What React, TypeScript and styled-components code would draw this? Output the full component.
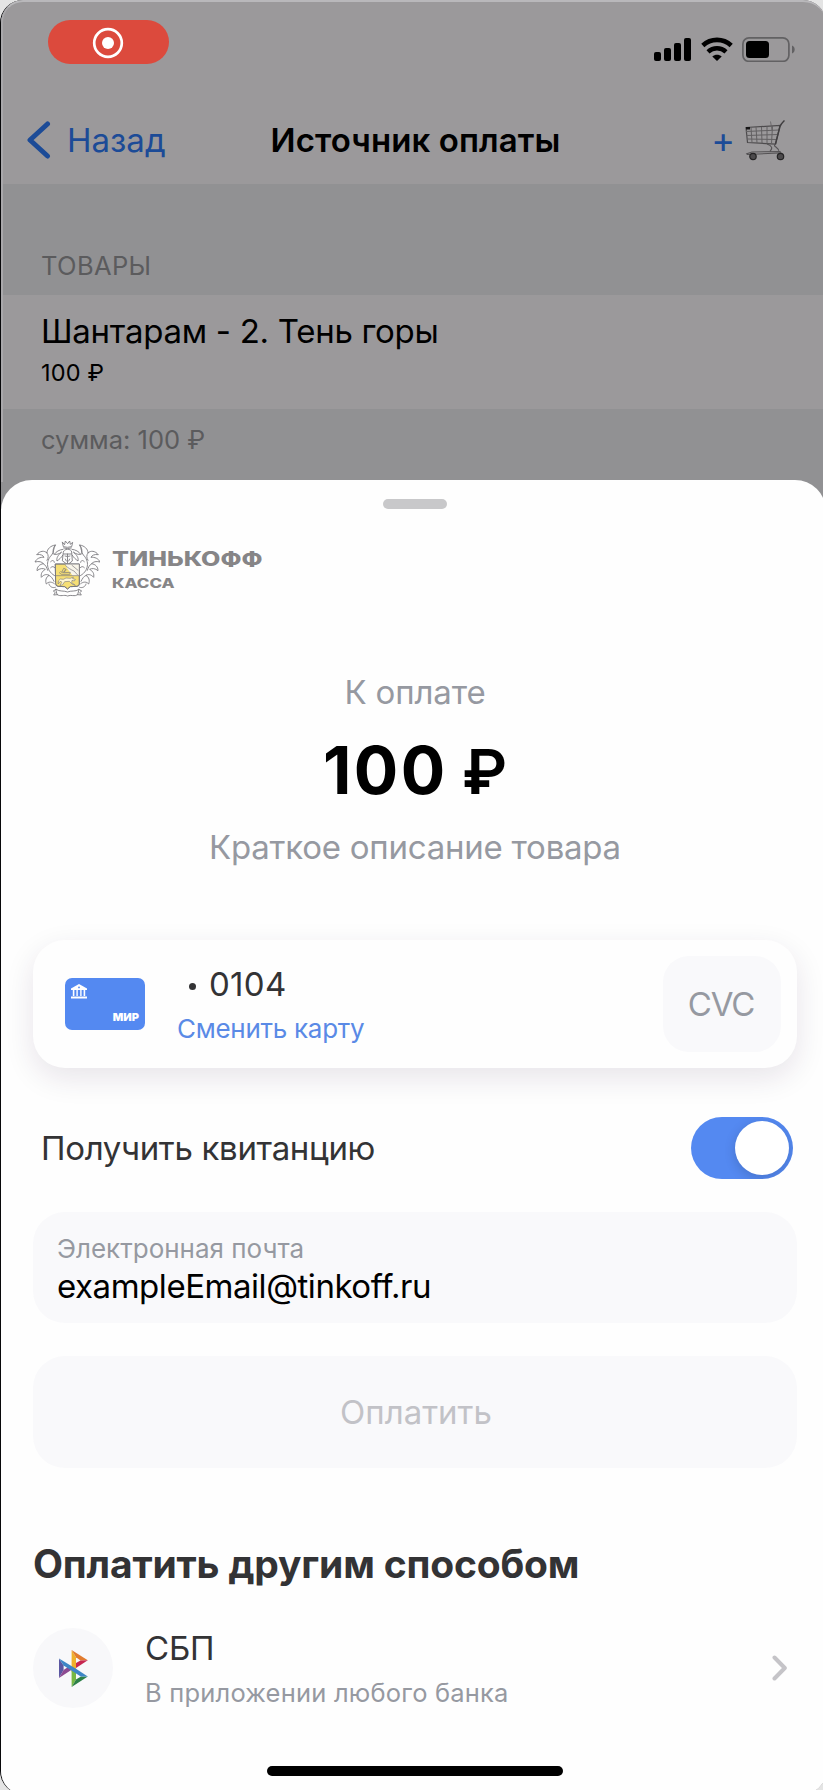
import React from 'react';
import styled, { createGlobalStyle } from 'styled-components';

const GlobalStyle = createGlobalStyle`
  * { box-sizing: border-box; }
  html, body { margin: 0; padding: 0; background: #e4e4e4; }
  body { font-family: Inter, "Liberation Sans", sans-serif; -webkit-font-smoothing: antialiased; }
  svg { display: block; flex: none; }
`;

const Viewport = styled.div`
  width: 823px;
  height: 1790px;
  overflow: hidden;
`;

const Phone = styled.div`
  position: relative;
  display: flex;
  flex-direction: column;
  width: 826px;
  height: 1794px;
  border-left: 1px solid #08080a;
  border-radius: 23px;
  overflow: hidden;
  background: #919193;
`;

const BezelGlow = styled.div`
  position: absolute;
  inset: 0 0 auto 0;
  height: 482px;
  border-top: 2px solid #b9b8bb;
  border-left: 2px solid #a9a8ab;
  border-top-left-radius: 22px;
  border-top-right-radius: 23px;
  pointer-events: none;
`;

const Text = styled.span<{ $size: number; $line: number; $color?: string; $weight?: number; $spacing?: number }>`
  display: block;
  white-space: nowrap;
  font-size: ${(p) => p.$size}px;
  line-height: ${(p) => p.$line}px;
  font-weight: ${(p) => p.$weight ?? 400};
  letter-spacing: ${(p) => p.$spacing ?? 0}px;
  color: ${(p) => p.$color ?? '#000'};
`;

const StatusBar = styled.div`
  display: flex;
  justify-content: space-between;
  align-items: flex-start;
  height: 96px;
  padding: 20px 30px 0 46.5px;
  background: #9b999b;
`;

const RecordingPill = styled.div`
  display: flex;
  align-items: center;
  justify-content: center;
  width: 121px;
  height: 43.5px;
  padding-top: 2px;
  border-radius: 22px;
  background: #dc4a3d;
`;

const StatusIcons = styled.div`
  display: flex;
  gap: 9.5px;
  padding-top: 17px;
`;

const NavBar = styled.div`
  display: grid;
  grid-template-columns: 1fr auto 1fr;
  align-items: center;
  height: 88px;
  padding: 0 21px 0 25px;
  background: #9b999b;
`;

const BackButton = styled.div`
  display: flex;
  align-items: center;
  gap: 16px;
`;

const CartButton = styled.div`
  display: flex;
  align-items: center;
  justify-content: flex-end;
  gap: 10px;
  padding-right: 19px;
`;

const SectionHeader = styled.div`
  height: 111px;
  padding: 53px 0 0 40px;
`;

const ProductRow = styled.div`
  display: flex;
  flex-direction: column;
  gap: 6.5px;
  height: 114px;
  padding: 16px 0 0 40px;
  background: #9b999b;
`;

const SectionFooter = styled.div`
  height: 71px;
  padding-left: 40px;
`;

const Sheet = styled.div`
  position: relative;
  display: flex;
  flex-direction: column;
  flex: 1;
  padding: 19px 29px 0 32px;
  border-radius: 31px 31px 0 0;
  background: #fefefe;
`;

const Grabber = styled.div`
  align-self: center;
  width: 64px;
  height: 10px;
  border-radius: 5px;
  background: #c8c8ca;
`;

const Brand = styled.div`
  display: flex;
  gap: 11.5px;
  height: 65px;
  margin-top: 26px;
`;

const BrandName = styled.div`
  display: flex;
  flex-direction: column;
  padding-top: 12px;
`;

const BrandLine = styled(Text)<{ $stretch: number }>`
  transform: scaleX(${(p) => p.$stretch});
  transform-origin: left center;
`;

const Summary = styled.div`
  display: flex;
  flex-direction: column;
  align-items: center;
  gap: 20px;
  margin-top: 72px;
`;

const Amount = styled(Text)`
  word-spacing: -4px;
`;

const Ruble = styled.span`
  font-size: 62px;
  font-weight: 600;
  line-height: 0;
  letter-spacing: 0;
`;

const CardPanel = styled.div`
  display: flex;
  align-items: center;
  height: 128px;
  margin-top: 74px;
  padding: 0 16px 0 32px;
  border-radius: 32px;
  background: #fefefe;
  box-shadow: 0 10px 30px rgba(50, 20, 60, 0.11);
`;

const MiniCard = styled.div`
  display: flex;
  flex-direction: column;
  justify-content: space-between;
  width: 80px;
  height: 52px;
  padding: 6px 6px 7px;
  border-radius: 7px;
  background: #5489f1;
`;

const MirMark = styled(Text)`
  align-self: flex-end;
`;

const CardInfo = styled.div`
  display: flex;
  flex-direction: column;
  flex: 1;
  gap: 10px;
  padding-left: 32px;
`;

const CardNumber = styled.div`
  display: flex;
  align-items: center;
  gap: 13px;
  padding-left: 12px;
`;

const Dot = styled.span`
  width: 7px;
  height: 7px;
  margin-top: 4px;
  border-radius: 50%;
  background: #333335;
`;

const CvcField = styled.div`
  display: flex;
  align-items: center;
  justify-content: center;
  width: 118px;
  height: 96px;
  padding-right: 2px;
  border-radius: 26px;
  background: #f9f9fb;
`;

const ReceiptRow = styled.div`
  display: flex;
  align-items: center;
  justify-content: space-between;
  height: 62px;
  margin-top: 49px;
  padding: 0 4px 0 8px;
`;

const Toggle = styled.div`
  display: flex;
  justify-content: flex-end;
  width: 102px;
  height: 62px;
  padding: 4px;
  border-radius: 31px;
  background: #5489f1;
  overflow: hidden;
`;

const Knob = styled.div`
  width: 54px;
  height: 54px;
  border-radius: 50%;
  background: #fff;
  box-shadow: 0 3px 12px rgba(0, 0, 0, 0.16);
`;

const EmailField = styled.div`
  display: flex;
  flex-direction: column;
  height: 111px;
  margin-top: 33px;
  padding: 21px 24px 0;
  border-radius: 32px;
  background: #f9f9fb;
`;

const PayButton = styled.div`
  display: flex;
  align-items: center;
  justify-content: center;
  height: 112px;
  margin-top: 33px;
  padding-left: 2px;
  border-radius: 32px;
  background: #f9f9fb;
`;

const Heading = styled(Text)`
  margin-top: 71px;
`;

const MethodRow = styled.div`
  display: flex;
  align-items: center;
  height: 80px;
  margin-top: 39px;
  padding-right: 9px;
`;

const MethodIcon = styled.div`
  display: flex;
  align-items: center;
  justify-content: center;
  width: 80px;
  height: 80px;
  border-radius: 50%;
  background: #f8f8fa;
`;

const MethodInfo = styled.div`
  display: flex;
  flex-direction: column;
  flex: 1;
  gap: 10px;
  padding-left: 32px;
`;

const HomeIndicator = styled.div`
  align-self: center;
  width: 296px;
  height: 10px;
  margin-top: 58px;
  border-radius: 5px;
  background: #000;
`;

const RecordIcon = () => (
  <svg width="32" height="32" viewBox="0 0 32 32">
    <circle cx="16" cy="16" r="13.8" fill="none" stroke="#fff" strokeWidth="2.7" />
    <circle cx="16" cy="16" r="6" fill="#fff" />
  </svg>
);

const SignalIcon = () => (
  <svg width="37" height="24" viewBox="0 0 37 24">
    <rect x="0" y="15" width="7" height="9" rx="2" />
    <rect x="10" y="11" width="7" height="13" rx="2" />
    <rect x="20" y="6" width="7" height="18" rx="2" />
    <rect x="30" y="1" width="7" height="23" rx="2" />
  </svg>
);

const WifiIcon = () => (
  <svg width="32" height="24" viewBox="0 0 32 24">
    <path d="M1.8 8.5C9.8 1 22.2 1 30.2 8.5" fill="none" stroke="#000" strokeWidth="4.6" />
    <path d="M7 14.8C12.2 10 19.8 10 25 14.8" fill="none" stroke="#000" strokeWidth="4.4" />
    <path d="M11.3 19.6C14 17.2 18 17.2 20.7 19.6L16 24Z" />
  </svg>
);

const BatteryIcon = () => (
  <svg width="54" height="25" viewBox="0 0 54 25">
    <rect x="0.9" y="0.9" width="46" height="23.4" rx="6" fill="none" stroke="#626163" strokeWidth="1.7" />
    <rect x="4" y="4" width="23" height="17" rx="3.5" />
    <path d="M50 8.5C53.6 9.8 53.6 15.2 50 16.5Z" fill="#626163" />
  </svg>
);

const BackIcon = () => (
  <svg width="25" height="38" viewBox="0 0 25 38">
    <path d="M21.5 3L4 19L21.5 35" fill="none" stroke="#1c4b97" strokeWidth="5" strokeLinecap="round" strokeLinejoin="round" />
  </svg>
);

const CartIcon = () => (
  <svg width="41" height="43" viewBox="0 0 41 43" fill="none">
    <path d="M1 8.5L35 6.5L30.5 25L2.5 23.5Z" stroke="#4d4b4d" strokeWidth="1.2" />
    <path d="M1 12.5L34 11M1.5 16.5L33 15.5M2 20L32 20.5M6 8.5L7 23.5M11 8L12 24M16.5 8L17 24M22 7.5L22 24.5M27.5 7L26.5 24.5" stroke="#626062" strokeWidth="1" />
    <path d="M39.5 1.5C37 4 36 4.5 35 7.5L30.5 25" stroke="#3f3d3f" strokeWidth="1.4" />
    <path d="M25.5 2.5L27 11" stroke="#626062" strokeWidth="0.8" />
    <path d="M22 25C27 26.5 28 29.5 25 32M30.5 25C27 28 34 27.5 34 33M1 35L7 33L35 32.5L38 37M2 35.5L35 34" stroke="#555355" strokeWidth="1.1" />
    <rect x="1" y="8" width="4" height="2.5" fill="#161516" />
    <circle cx="8" cy="37.5" r="3.2" fill="#4c4a4c" stroke="#242324" strokeWidth="1.2" />
    <circle cx="35.5" cy="37.5" r="3.2" fill="#4c4a4c" stroke="#242324" strokeWidth="1.2" />
  </svg>
);

const CrestHalf = () => (
  <>
    <path d="M99 43C88 44 78 50 73 58C80 59 87 57 94 52M94 52C84 61 79 68 81 78C88 73 94 68 98 61" />
    <path d="M72 58C67 50 69 39 76 30C62 32 51 42 51 54C43 46 30 47 20 59C32 57 39 61 42 67C31 66 20 70 15 81C27 78 35 80 40 86C29 88 21 95 21 107C29 100 39 99 46 103C36 109 32 116 34 127C42 118 50 117 57 121C48 127 45 136 49 147C56 139 65 140 73 146" />
    <path d="M76 30C70 40 72 51 65 60C56 69 51 81 53 93C55 107 65 118 76 123M51 54C56 60 56 68 51 76M40 86C47 90 50 97 53 106M57 121C64 124 68 131 72 139" />
    <path d="M62 80C68 74 72 76 73 82M62 98C67 93 71 94 74 98" />
    <path d="M57 147C59 155 67 160 76 157" />
  </>
);

const Crest = () => (
  <svg width="67" height="65" viewBox="9 0 201 195" fill="none" stroke="#77767b" strokeWidth="2.6" strokeLinejoin="round" strokeLinecap="round">
    <CrestHalf />
    <g transform="translate(225 0) scale(-1 1)">
      <CrestHalf />
    </g>
    <path d="M97 22L100 35Q112 39 125 35L128 22L121 28L119 18L113 26L106 18L104 28ZM101 39Q112 43 124 39" />
    <path d="M100 51C101 40 124 40 125 51L127 78L113 89L98 78Z" fill="#fefefe" />
    <path d="M101 57L124 57M112.5 57V85M105 63L110 64M115 64L120 63M106 72L109 78M119 72L116 78" />
    <path d="M77 87H148V147Q148 153 141 154L121 155L112.5 162L104 155L84 154Q77 153 77 147Z" fill="#f6df75" />
    <path d="M106 87H148V122H128L112 101Z" fill="#f8f5ea" stroke="none" />
    <path d="M78 122H147M107 92C113 98 124 105 132 108L143 120M126 91L144 106M92 110C98 116 104 110 110 104M88 113L94 118L119 118L121 112L101 113L107 102L101 100L96 110" strokeWidth="2" />
    <path d="M86 137L91 132L100 133L108 129L121 130L130 126L128 131L136 133L133 138L126 136L125 143L136 151L126 147L118 139L104 140L98 149L90 152L95 142L92 138L85 146Z" fill="#fff7d2" strokeWidth="1.8" />
    <path d="M77 87H148V147Q148 153 141 154L121 155L112.5 162L104 155L84 154Q77 153 77 147Z" />
    <path d="M78 163C89 171 102 166 112.5 171C123 166 136 171 147 163L143 179C134 186 123 178 112.5 183C102 178 91 186 82 179Z" fill="#fefefe" />
    <path d="M78 163L70 168L76 173L71 180L82 179M147 163L155 168L149 173L154 180L143 179" />
  </svg>
);

const BankIcon = () => (
  <svg width="16" height="15" viewBox="0 0 16 15" fill="#fff">
    <path d="M8 0L16 4.5V6H0V4.5Z" />
    <path d="M1.8 6H3.4V12H1.8ZM5.4 6H6.8V12H5.4ZM9.2 6H10.6V12H9.2ZM12.6 6H14.2V12H12.6ZM0 12.6H16V14.4H0Z" />
    <circle cx="8" cy="3.4" r="0.9" fill="#5489f1" />
  </svg>
);

const SbpIcon = () => (
  <svg width="29" height="37" viewBox="0 0 29 37">
    <path d="M0 8.5L4.6 15.5V20L0 28Z" fill="#5b57a2" />
    <path d="M4.6 20L9 17L13 19.4L0 28Z" fill="#8d4a91" />
    <path d="M12.6 0L17 7.2V22H12.6Z" fill="#f0b12c" />
    <path d="M12.6 0L28.8 10.2L21.5 10.4L17 7.2Z" fill="#e17b2f" />
    <path d="M17 13L21.5 10.4L28.8 10.2L17 18Z" fill="#c7264f" />
    <path d="M12.6 17L17 20V29.6L12.6 37Z" fill="#78b843" />
    <path d="M12.6 37L17 29.6L22 26.6L28.8 26.5Z" fill="#2d8047" />
    <path d="M0 8.5L17 18.8L28.8 26.5L21.8 26.5L4.6 15.5Z" fill="#3e86c6" />
  </svg>
);

const ChevronIcon = () => (
  <svg width="16" height="26" viewBox="0 0 16 26">
    <path d="M2.5 2.5L12.8 13L2.5 23.5" fill="none" stroke="#c5c4c8" strokeWidth="4" strokeLinecap="round" strokeLinejoin="round" />
  </svg>
);

export default function App() {
  return (
    <Viewport>
      <GlobalStyle />
      <Phone>
        <StatusBar>
          <RecordingPill><RecordIcon /></RecordingPill>
          <StatusIcons>
            <SignalIcon />
            <WifiIcon />
            <BatteryIcon />
          </StatusIcons>
        </StatusBar>
        <NavBar>
          <BackButton>
            <BackIcon />
            <Text $size={33} $line={40} $color="#1c4b97">Назад</Text>
          </BackButton>
          <Text $size={33} $line={40} $weight={600} $spacing={0.09}>Источник оплаты</Text>
          <CartButton>
            <Text $size={36} $line={40} $color="#1c4b97">+</Text>
            <CartIcon />
          </CartButton>
        </NavBar>
        <SectionHeader>
          <Text $size={25.5} $line={58} $color="#5b5b5d" $spacing={0.35}>ТОВАРЫ</Text>
        </SectionHeader>
        <ProductRow>
          <Text $size={33} $line={40} $spacing={-0.28}>Шантарам - 2. Тень горы</Text>
          <Text $size={23.5} $line={30} $spacing={0.17}>100 ₽</Text>
        </ProductRow>
        <SectionFooter>
          <Text $size={25.5} $line={62} $color="#5b5b5d">сумма: 100 ₽</Text>
        </SectionFooter>
        <BezelGlow />
        <Sheet>
          <Grabber />
          <Brand>
            <Crest />
            <BrandName>
              <BrandLine $size={19.5} $line={24} $weight={800} $color="#868587" $stretch={1.285}>ТИНЬКОФФ</BrandLine>
              <BrandLine $size={13} $line={25} $weight={800} $color="#868587" $stretch={1.305}>КАССА</BrandLine>
            </BrandName>
          </Brand>
          <Summary>
            <Text $size={33} $line={40} $color="#9699a1" $spacing={-0.14}>К оплате</Text>
            <Amount $size={66} $line={76} $weight={700} $spacing={2.5}>100 <Ruble>₽</Ruble></Amount>
            <Text $size={33} $line={38} $color="#9699a1" $spacing={-0.24}>Краткое описание товара</Text>
          </Summary>
          <CardPanel>
            <MiniCard>
              <BankIcon />
              <MirMark $size={11} $line={12} $weight={900} $color="#fff">МИР</MirMark>
            </MiniCard>
            <CardInfo>
              <CardNumber>
                <Dot />
                <Text $size={33} $line={40} $color="#333335" $spacing={0.3}>0104</Text>
              </CardNumber>
              <Text $size={26} $line={30} $color="#5a8ae6" $spacing={-0.28}>Сменить карту</Text>
            </CardInfo>
            <CvcField>
              <Text $size={33} $line={40} $color="#9699a1" $spacing={-1.1}>CVC</Text>
            </CvcField>
          </CardPanel>
          <ReceiptRow>
            <Text $size={33} $line={40} $color="#333335" $spacing={-0.32}>Получить квитанцию</Text>
            <Toggle><Knob /></Toggle>
          </ReceiptRow>
          <EmailField>
            <Text $size={26} $line={31} $color="#9699a1">Электронная почта</Text>
            <Text $size={33} $line={44} $spacing={-0.46}>exampleEmail@tinkoff.ru</Text>
          </EmailField>
          <PayButton>
            <Text $size={33} $line={40} $color="#c2c2c7">Оплатить</Text>
          </PayButton>
          <Heading $size={39} $line={50} $weight={700} $color="#333335" $spacing={-0.18}>Оплатить другим способом</Heading>
          <MethodRow>
            <MethodIcon><SbpIcon /></MethodIcon>
            <MethodInfo>
              <Text $size={33} $line={40} $color="#333335" $spacing={-0.2}>СБП</Text>
              <Text $size={25.5} $line={30} $color="#9699a1" $spacing={0.2}>В приложении любого банка</Text>
            </MethodInfo>
            <ChevronIcon />
          </MethodRow>
          <HomeIndicator />
        </Sheet>
      </Phone>
    </Viewport>
  );
}
